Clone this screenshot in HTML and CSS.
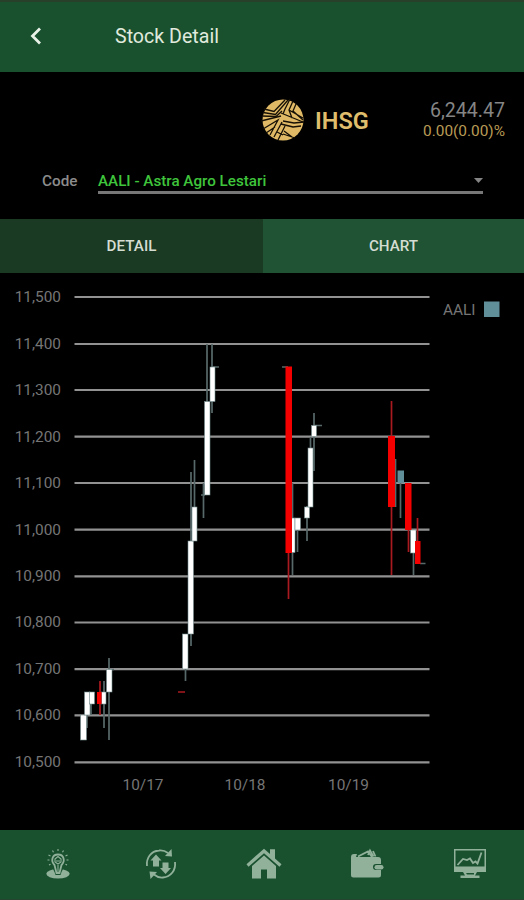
FILE: index.html
```html
<!DOCTYPE html>
<html lang="en">
<head>
    <meta charset="utf-8">
    <title>Stock Detail</title>
    <link rel="stylesheet" href="styles.css">
</head>
<body>
    <header class="topbar">
        <svg class="back" width="12" height="18" viewBox="0 0 12 18"><path d="M10 1.5 2.5 9l7.500 7.500"/></svg>
        <h1 class="title">Stock Detail</h1>
    </header>

    <!-- index summary -->
    <section class="index">
        <svg class="logo" width="44" height="44" viewBox="0 0 44 44">
            <circle class="disc" cx="22" cy="22" r="20.500"/>
            <path d="M3 11 13 13.500 24 2M2 14.500 14.500 16.500 27 2M1 18 15 18.500 21 13M29 1 24 11l-2 5M32 3l-4 9 3 8M28 12l14 8M35 6l-3 7 10 9M20 15l22 9"/>
            <path d="M0 23 20 18M2 31l15-9-8 15M5 35l9-6M22 23l11 2 10-1M20 26l12 3 8-1M13 39l8-15M17 42l7-14M22 36l12 4M23 33l8 6M16 34l6 3"/>
        </svg>
        <span class="index-name">IHSG</span>
        <div class="index-values">
            <span class="price">6,244.47</span>
            <span class="change">0.00(0.00)%</span>
        </div>
    </section>

    <section class="picker">
        <span class="picker-label">Code</span>
        <div class="select">
            <span class="select-text">AALI - Astra Agro Lestari</span>
            <span class="caret"></span>
        </div>
    </section>

    <nav class="tabs">
        <div class="tab">DETAIL</div>
        <div class="tab active">CHART</div>
    </nav>

    <main class="chart">
        <svg width="524" height="557" viewBox="0 273 524 557">
            <g class="axis-y">
                <text x="61" y="302">11,500</text>
                <text x="61" y="349">11,400</text>
                <text x="61" y="395">11,300</text>
                <text x="61" y="442">11,200</text>
                <text x="61" y="488">11,100</text>
                <text x="61" y="535">11,000</text>
                <text x="61" y="581">10,900</text>
                <text x="61" y="627">10,800</text>
                <text x="61" y="674">10,700</text>
                <text x="61" y="720">10,600</text>
                <text x="61" y="767">10,500</text>
            </g>
            <g class="axis-x">
                <text x="143" y="790">10/17</text>
                <text x="245" y="790">10/18</text>
                <text x="348.500" y="790">10/19</text>
            </g>
            <path class="grid" d="M74.500 297H429.500M74.500 344H429.500M74.500 390H429.500M74.500 436.700H429.500M74.500 483H429.500M74.500 529.700H429.500M74.500 576.300H429.500M74.500 622.500H429.500M74.500 669.200H429.500M74.500 715.300H429.500M74.500 762.300H429.500"/>

            <!-- wicks -->
            <path class="wick" d="M87 715v13M91 692v23M104 681v47M109 658v82M109 669.500h5M185.500 669v12M191 472v174M194.500 460v50M203.500 483v35M201 495h4M207 344v58M212 344v69M212 367h7"/>
            <path class="wick" d="M282 367h6M292.500 483v92M297.500 530v22M307 506v35M310.500 437v60M314 413v58M314 425.500h8M395.500 459v48M400.500 472v46M413.500 550v25M420 563.500h5.500"/>
            <path class="wick-red" d="M100 681v34M178 692h7M288.500 552v47M391.500 401v174M408.500 529v23M417.500 518v34"/>

            <!-- candle bodies -->
            <g class="up">
                <rect x="80.500" y="715" width="6" height="25"/>
                <rect x="84.500" y="692" width="5.500" height="23"/>
                <rect x="89.500" y="692" width="5" height="12"/>
                <rect x="101.500" y="692" width="4.500" height="12"/>
                <rect x="106.500" y="669.500" width="5.500" height="22.500"/>
                <rect x="182.500" y="634" width="5.500" height="35"/>
                <rect x="188" y="541" width="5.500" height="93"/>
                <rect x="192" y="507" width="5" height="34"/>
                <rect x="204.500" y="401.500" width="5.500" height="93.500"/>
                <rect x="210" y="367" width="5" height="34.500"/>
                <rect x="290" y="518" width="5" height="34.500"/>
                <rect x="295" y="518" width="5.500" height="12"/>
                <rect x="304.500" y="507" width="5" height="11"/>
                <rect x="308" y="448" width="5" height="59"/>
                <rect x="311.500" y="425.500" width="5" height="11"/>
                <rect x="410.500" y="530" width="5.500" height="23"/>
            </g>
            <g class="down">
                <rect x="97" y="692" width="4.500" height="12"/>
                <rect x="285.500" y="366.500" width="6.500" height="186.500"/>
                <rect x="388" y="436" width="7" height="71"/>
                <rect x="405" y="483" width="6.500" height="47"/>
                <rect x="415" y="541" width="5.500" height="23"/>
            </g>
            <rect class="flat" x="397.500" y="470.500" width="6.500" height="12.500"/>

            <text class="legend" x="443" y="315">AALI</text>
            <rect class="flat" x="484" y="301.500" width="15.500" height="15.500"/>
        </svg>
    </main>

    <footer class="bottombar">
        <!-- idea -->
        <svg class="nav-icon" width="26" height="32" viewBox="0 0 26 32">
            <ellipse cx="13" cy="25.800" rx="11.700" ry="4.800"/>
            <path class="cut" d="M9.500 24 8 21h10l-1.500 3-1 3h-5z"/>
            <path class="line" d="M11.500 25 9.500 17C5.500 13 7 6.500 13 6.500S20.500 13 16.500 17l-2 8z"/>
            <path class="thin" d="M13 25v-8M10 11l3-2.500 3 2.500v3l-3 2-3-2zM11 13h4"/>
            <path class="thin" d="M13 1v2M7.500 2.500l1 1.800M18.500 2.500l-1 1.800M3.500 7l2 1M22.500 7l-2 1M2.500 12h2M21.500 12h2M4 17l1.500-.8M22 17l-1.500-.8"/>
        </svg>
        <!-- trade -->
        <svg class="nav-icon" width="32" height="32" viewBox="0 0 32 32">
            <path class="line" d="M2 18C1 10 6 3 14 2.500q5-.5 9 2.500M30 14c1 8-4 15-12 15.500q-5 .5-9-3"/>
            <path d="M20 8 26.500 1 27 8.500zM12 24 4.500 23.500 5.500 31z"/>
            <path d="m11 6.500 5.500 6H14v6H8v-6H5.500zM20.500 26l-5.500-6h2.500v-5.500h6V20H26z"/>
        </svg>
        <!-- home -->
        <svg class="nav-icon" width="36" height="32" viewBox="0 0 36 32">
            <path d="M18 .8 24 6V1.300h5V10.500l6.500 5.700-2 2.500L18 5.200 2.500 18.700l-2-2.500z"/>
            <path d="M18 7.500 30 18v12.500h-9v-9h-6v9H6V18z"/>
        </svg>
        <!-- wallet -->
        <svg class="nav-icon" width="34" height="32" viewBox="0 0 34 32">
            <path d="M1 9q0-3 3-3h3L6 9h22q3 0 3 3v4h-5q-3 0-3 3t3 3h5v5q0 2.500-2.500 2.500h-25Q1 29.500 1 27z"/>
            <path class="line" d="m8 8.500 10-5L22 9M18 7l2-4.500 3.500 6M23 3l2.500 5.500"/>
            <rect x="24.500" y="17" width="9" height="4.500" rx="2.200"/>
        </svg>
        <!-- market -->
        <svg class="nav-icon" width="34" height="32" viewBox="0 0 34 32">
            <path d="M1 1h32v23H1zM2.500 2.500v16h29v-16z" fill-rule="evenodd"/>
            <path d="M10 24h14l-2 3.500h4.500V30h-19v-2.500H12z"/>
            <path class="cut" d="M13 25h8v1.500h-7z"/>
            <path class="line" d="m4.500 17 5.500-6 4 1 3-1.500 3 4.500 2.500-1.500 2 2 4-11"/>
        </svg>
    </footer>
</body>
</html>
```

FILE: styles.css
```css
* {
    box-sizing: border-box;
}

body {
    margin: 0;
    width: 524px;
    height: 900px;
    display: flex;
    flex-direction: column;
    background: #000;
    font-family: Roboto, "Liberation Sans", sans-serif;
    overflow: hidden;
}

.topbar {
    height: 72px;
    display: flex;
    align-items: center;
    padding: 0 0 2px 30px;
    gap: 73px;
    background: #19512f;
    border-top: 2px solid #28402a;
}

.back {
    fill: none;
    stroke: #e8f2e6;
    stroke-width: 2.800;
}

.title {
    margin: 0;
    font-size: 19.6px;
    font-weight: 400;
    color: #e0eadd;
}

.index {
    height: 93px;
    display: flex;
    align-items: center;
    padding: 2px 19px 0 261px;
}

.logo .disc {
    fill: #dfb965;
}

.logo path {
    fill: none;
    stroke: #161006;
    stroke-width: 1.3;
}

.index-name {
    margin-left: 10px;
    padding-top: 2px;
    font-size: 23.5px;
    font-weight: 600;
    color: #dfbd6c;
}

.index-values {
    margin-left: auto;
    display: flex;
    flex-direction: column;
    align-items: flex-end;
}

.price {
    font-size: 19.6px;
    line-height: 22px;
    color: #858585;
}

.change {
    font-size: 15.4px;
    line-height: 18px;
    color: #b99b55;
}

.picker {
    height: 54px;
    display: flex;
    padding: 0 41px 0 42px;
}

.picker-label {
    width: 56px;
    padding-top: 6px;
    font-size: 15.3px;
    font-weight: 500;
    line-height: 20px;
    color: #8c8c8c;
}

.select {
    flex: 1;
    height: 29px;
    padding-top: 6px;
    display: flex;
    justify-content: space-between;
    border-bottom: 3px solid #777;
}

.select-text {
    font-size: 15.2px;
    font-weight: 500;
    line-height: 20px;
    color: #3fc53c;
}

.caret {
    width: 9px;
    height: 5px;
    margin-top: 7px;
    background: #858585;
    clip-path: polygon(0 0, 100% 0, 50% 100%);
}

.tabs {
    height: 54px;
    display: flex;
}

.tab {
    width: 263px;
    display: flex;
    align-items: center;
    justify-content: center;
    background: #1a3a24;
    font-size: 15.2px;
    font-weight: 500;
    color: #d5ddd3;
}

.tab.active {
    width: 261px;
    background: #205333;
}

.chart {
    height: 557px;
}

.chart svg {
    display: block;
}

.chart text {
    font-size: 15.4px;
    fill: #757575;
}

.axis-y text {
    text-anchor: end;
}

.axis-x text {
    text-anchor: middle;
}

.grid {
    stroke: #929292;
    stroke-width: 2.2;
}

.wick {
    fill: none;
    stroke: #58696a;
    stroke-width: 1.7;
}

.wick-red {
    fill: none;
    stroke: #a91a20;
    stroke-width: 1.7;
}

.up {
    fill: #fff;
    stroke: #72898b;
    stroke-width: 0.6;
}

.down {
    fill: #f50000;
}

.flat {
    fill: #618f99;
}

.bottombar {
    height: 70px;
    display: grid;
    grid-template-columns: repeat(5, 103px);
    align-items: center;
    justify-items: center;
    padding: 0 0 1px 6px;
    background: #19512f;
    border-bottom: 1px solid #24452f;
}

.nav-icon {
    fill: #91b19a;
}

.nav-icon .line {
    fill: none;
    stroke: #91b19a;
    stroke-width: 1.8;
}

.nav-icon .thin {
    fill: none;
    stroke: #91b19a;
    stroke-width: 1.1;
}

.nav-icon .cut {
    fill: #19512f;
}
```
